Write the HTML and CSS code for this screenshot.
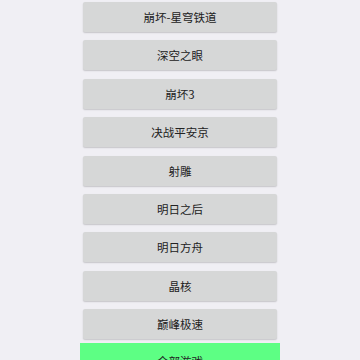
FILE: index.html
```html
<html lang="en">
<head>
    <meta charset="UTF-8">
    <meta name="viewport" content="width=device-width, initial-scale=1.0">
    <title>Games</title>
    <link rel="stylesheet" href="styles.css">
</head>
<body>
<div class="container">
    <div class="game-list">
        <div class="game-btn">崩坏-星穹铁道</div>
        <div class="game-btn">深空之眼</div>
        <div class="game-btn">崩坏3</div>
        <div class="game-btn">决战平安京</div>
        <div class="game-btn">射雕</div>
        <div class="game-btn">明日之后</div>
        <div class="game-btn">明日方舟</div>
        <div class="game-btn">晶核</div>
        <div class="game-btn">巅峰极速</div>
    </div>
    <div class="all-btn">全部游戏</div>
</div>
</body>
</html>
```

FILE: styles.css
```css
/* Game launcher list */
body { margin: 0; background-color: #f0eff4; font-family: "Noto Sans CJK SC", "Roboto", sans-serif; }
.container { width: 200px; margin: 0 auto; padding-top: 2px; }
.game-list { display: flex; flex-direction: column; gap: 8.375px; padding: 0 3px; }
.game-btn { height: 30px; display: flex; align-items: center; justify-content: center; background-color: #d6d7d7; color: #222; font-size: 11.5px; border-radius: 2px; box-shadow: 0 1px 1.5px rgba(0, 0, 0, 0.18); }
.all-btn { margin-top: 4.3px; height: 36px; display: flex; align-items: center; justify-content: center; background-color: #5dff84; color: #222; font-size: 11.5px; }
```
